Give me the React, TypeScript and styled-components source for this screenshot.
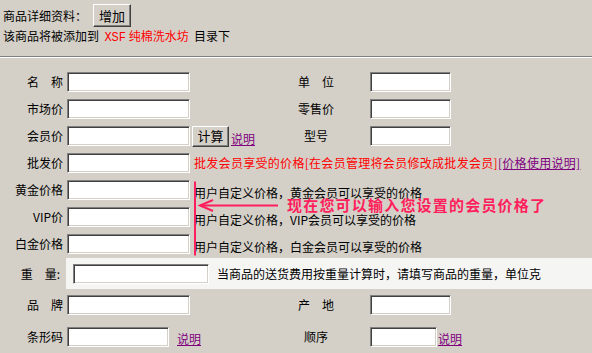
import React from 'react';
import styled, { createGlobalStyle } from 'styled-components';

const GlobalStyle = createGlobalStyle`
    html, body {
        margin: 0;
        padding: 0;
        background: #d4d0c8;
    }
    body {
        font-family: "Noto Sans CJK SC", "Liberation Sans", sans-serif;
        font-size: 12px;
        color: #000;
        width: 592px;
        overflow: hidden;
    }
`;

const CJK = `"Noto Sans CJK SC", "Liberation Sans", sans-serif`;
const PINK = '#ff1f5c';

const App = () => {
    return (
        <Page>
            <GlobalStyle />
            <Header>
                <HeadLine>
                    <span>商品详细资料：</span>
                    <ClassicButton $w={38} $h={23}>增加</ClassicButton>
                </HeadLine>
                <SubLine>
                    该商品将被添加到&nbsp;&nbsp;<RedText><Mono>XSF</Mono> 纯棉洗水坊</RedText>&nbsp;&nbsp;目录下
                </SubLine>
            </Header>
            <Rule />
            <Form>
                <Row>
                    <Label>名　称</Label>
                    <Cell><Field $w={123} /></Cell>
                    <SideLabel>单　位</SideLabel>
                    <SideCell><Field $w={81} /></SideCell>
                </Row>
                <Row>
                    <Label>市场价</Label>
                    <Cell><Field $w={123} /></Cell>
                    <SideLabel>零售价</SideLabel>
                    <SideCell><Field $w={81} /></SideCell>
                </Row>
                <Row>
                    <Label>会员价</Label>
                    <Cell>
                        <Field $w={123} />
                        <ClassicButton $w={37} $h={21}>计算</ClassicButton>
                        <Link>说明</Link>
                    </Cell>
                    <SideLabel>型号</SideLabel>
                    <SideCell><Field $w={81} /></SideCell>
                </Row>
                <Row>
                    <Label>批发价</Label>
                    <WideCell>
                        <Field $w={123} />
                        <Note $red $spread>批发会员享受的价格[在会员管理将会员修改成批发会员]<Link>[价格使用说明]</Link></Note>
                    </WideCell>
                </Row>
                <Group>
                    <Row>
                        <Label>黄金价格</Label>
                        <WideCell>
                            <Field $w={123} />
                            <Note $low>用户自定义价格，黄金会员可以享受的价格</Note>
                        </WideCell>
                    </Row>
                    <Row>
                        <Label>VIP价</Label>
                        <WideCell>
                            <Field $w={123} />
                            <Note $low>用户自定义价格，VIP会员可以享受的价格</Note>
                        </WideCell>
                    </Row>
                    <Row>
                        <Label>白金价格</Label>
                        <WideCell>
                            <Field $w={123} />
                            <Note $low>用户自定义价格，白金会员可以享受的价格</Note>
                        </WideCell>
                    </Row>
                    <Marks width="100" height="81" viewBox="0 0 100 81">
                        <line x1="5" y1="4.5" x2="5" y2="78.5" stroke={PINK} strokeWidth="2" />
                        <line x1="10" y1="28.5" x2="88" y2="28.5" stroke={PINK} strokeWidth="2" />
                        <polyline points="23,23 10,28.5 23,34" fill="none" stroke={PINK} strokeWidth="2" />
                    </Marks>
                    <Callout>现在您可以输入您设置的会员价格了</Callout>
                </Group>
                <BandRow>
                    <BandLabel>重　量:</BandLabel>
                    <Band>
                        <Field $w={136} />
                        <span>当商品的送货费用按重量计算时，请填写商品的重量，单位克</span>
                    </Band>
                </BandRow>
                <Row $h={32}>
                    <Label>品　牌</Label>
                    <Cell><Field $w={123} /></Cell>
                    <SideLabel>产　地</SideLabel>
                    <SideCell><Field $w={81} /></SideCell>
                </Row>
                <Row $h={32}>
                    <Label>条形码</Label>
                    <Cell>
                        <Field $w={102} />
                        <Link $pad={6}>说明</Link>
                    </Cell>
                    <SideLabel>顺序</SideLabel>
                    <SideCell>
                        <Field $w={67} />
                        <Link>说明</Link>
                    </SideCell>
                </Row>
            </Form>
        </Page>
    );
};

const Page = styled.div`
    width: 592px;
    height: 353px;
    background: #d4d0c8;
    font-family: ${CJK};
    font-size: 12px;
`;

const Header = styled.div`
    padding: 4px 3px 0;
    display: flex;
    flex-direction: column;
`;

const HeadLine = styled.div`
    display: flex;
    align-items: center;
    gap: 6px;
    height: 23px;
    line-height: 16px;
`;

const SubLine = styled.div`
    margin-top: 1px;
    line-height: 16px;
    height: 16px;
`;

const RedText = styled.span`
    color: #ff0000;
`;

const Mono = styled.span`
    font-family: "Liberation Mono", monospace;
    font-size: 12px;
`;

const Rule = styled.div`
    margin-top: 12px;
    height: 0;
    border-top: 1px solid #808080;
    border-bottom: 1px solid #ffffff;
`;

const Form = styled.div`
    padding-top: 10.5px;
    display: flex;
    flex-direction: column;
`;

const Row = styled.div<{ $h?: number }>`
    display: grid;
    grid-template-columns: 63px 217px 72px 1fr;
    align-items: center;
    height: ${p => p.$h ?? 27}px;
    line-height: 16px;
    white-space: nowrap;
`;

const Label = styled.div`
    text-align: right;
`;

const Cell = styled.div`
    display: flex;
    align-items: center;
    padding-left: 4px;
    gap: 2px;
`;

const WideCell = styled(Cell)`
    grid-column: 2 / 5;
    gap: 4px;
`;

const SideLabel = styled.div`
    text-align: center;
`;

const SideCell = styled.div`
    display: flex;
    align-items: center;
    padding-left: 18px;
    gap: 1px;
`;

const Field = styled.div<{ $w: number }>`
    box-sizing: border-box;
    width: ${p => p.$w}px;
    height: 20px;
    flex: none;
    background: #fff;
    border-style: solid;
    border-width: 1px;
    border-color: #808080 #ffffff #ffffff #808080;
    box-shadow: inset 1px 1px 0 #404040, inset -1px -1px 0 #d4d0c8;
`;

const ClassicButton = styled.div<{ $w: number; $h: number }>`
    box-sizing: border-box;
    width: ${p => p.$w}px;
    height: ${p => p.$h}px;
    flex: none;
    display: flex;
    align-items: center;
    justify-content: center;
    background: #d4d0c8;
    border-style: solid;
    border-width: 1px;
    border-color: #ffffff #404040 #404040 #ffffff;
    box-shadow: inset -1px -1px 0 #808080;
    font-size: 13px;
    line-height: 16px;
`;

const Link = styled.span<{ $pad?: number }>`
    color: #800080;
    text-decoration: underline;
    padding-left: ${p => p.$pad ?? 0}px;
    line-height: 16px;
    align-self: flex-end;
`;

const Note = styled.span<{ $red?: boolean; $spread?: boolean; $low?: boolean }>`
    color: ${p => (p.$red ? '#ff0000' : '#000')};
    letter-spacing: ${p => (p.$spread ? '0.3px' : '0')};
    margin-top: ${p => (p.$low ? '4px' : '0')};
    line-height: ${p => (p.$low ? '13px' : '16px')};
    white-space: nowrap;
`;

const Group = styled.div`
    position: relative;
    display: flex;
    flex-direction: column;
`;

const Marks = styled.svg`
    position: absolute;
    left: 190px;
    top: 0;
`;

const Callout = styled.div`
    position: absolute;
    left: 287px;
    top: 21.5px;
    font-size: 15px;
    font-weight: bold;
    line-height: 14px;
    letter-spacing: 1.2px;
    color: ${PINK};
    white-space: nowrap;
`;

const BandRow = styled.div`
    display: grid;
    grid-template-columns: 66px 1fr;
    height: 31px;
    margin-top: 0.5px;
    line-height: 16px;
    white-space: nowrap;
`;

const BandLabel = styled.div`
    display: flex;
    align-items: center;
    justify-content: flex-end;
    padding-right: 6px;
`;

const Band = styled.div`
    display: flex;
    align-items: center;
    gap: 8px;
    padding-left: 7px;
    background: #f5f5f4;
`;

export default App;
